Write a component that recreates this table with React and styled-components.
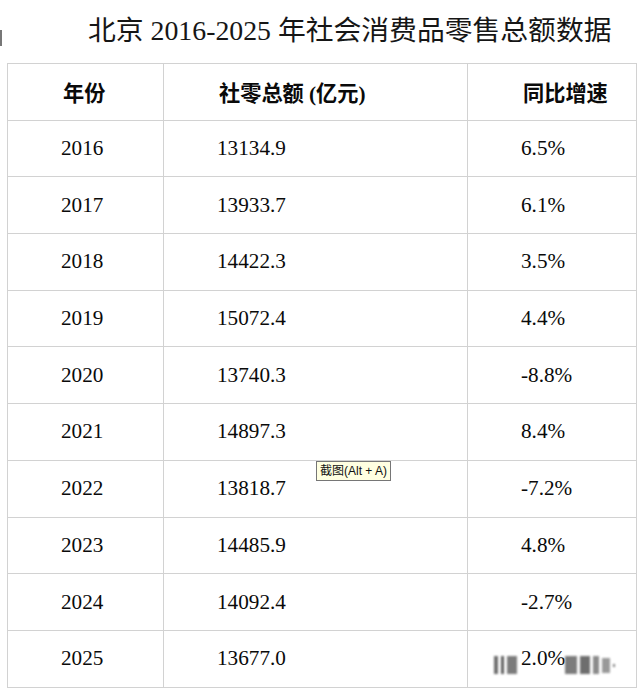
import React from "react";
import styled, { createGlobalStyle } from "styled-components";

const Global = createGlobalStyle`
  html, body { margin: 0; padding: 0; background: #fff; }
  body { font-family: "Liberation Serif", "Noto Sans CJK SC", serif; color: #000; }
`;

const Page = styled.div`
  position: relative;
  width: 641px;
  height: 691px;
  overflow: hidden;
  background: #fff;
`;

const Title = styled.h1`
  margin: 0;
  height: 63px;
  box-sizing: border-box;
  padding: 14px 0 0 88px;
  font-family: "Liberation Serif", "Noto Sans CJK SC", serif;
  font-weight: 400;
  font-size: 27.8px;
  line-height: 34px;
  color: #161616;
  white-space: nowrap;
`;

const Table = styled.div`
  margin-left: 7px;
  width: 630px;
  border: 1px solid #d2d2d2;
  border-bottom: none;
  box-sizing: border-box;
`;

const Row = styled.div`
  display: grid;
  grid-template-columns: 155px 304px 1fr;
  height: 56.7px;
  border-bottom: 1px solid #d2d2d2;
  box-sizing: border-box;
`;

const Cell = styled.div`
  display: flex;
  align-items: center;
  padding-left: ${(p) => (p.$head ? 55 : 53)}px;
  border-left: ${(p) => (p.$first ? "none" : "1px solid #d2d2d2")};
  font-family: "Liberation Serif", "Noto Sans CJK SC", serif;
  font-size: 21.2px;
  font-weight: ${(p) => (p.$head ? 700 : 400)};
  color: #0a0a0a;
  white-space: nowrap;
`;

const Tooltip = styled.div`
  position: absolute;
  left: 316px;
  top: 461px;
  height: 20px;
  padding: 0 3px;
  box-sizing: border-box;
  border: 1px solid #767676;
  background: #ffffe1;
  font-family: "Liberation Sans", "Noto Sans CJK SC", sans-serif;
  font-size: 12px;
  line-height: 18px;
  color: #111;
  white-space: nowrap;
`;

const Watermark = styled.div`
  position: absolute;
  left: 494px;
  top: 651px;
  width: 134px;
  height: 28px;
  display: flex;
  align-items: center;
  gap: 3px;
  filter: blur(1.2px);
  opacity: 0.85;
`;

const Bar = styled.div`
  width: ${(p) => p.$w}px;
  height: ${(p) => p.$h}px;
  background: ${(p) => p.$c};
  margin-left: ${(p) => p.$ml || 0}px;
`;

const EdgeMark = styled.div`
  position: absolute;
  left: 0;
  top: 30px;
  width: 2px;
  height: 16px;
  background: #777;
`;

const data = [
  ["2016", "13134.9", "6.5%"],
  ["2017", "13933.7", "6.1%"],
  ["2018", "14422.3", "3.5%"],
  ["2019", "15072.4", "4.4%"],
  ["2020", "13740.3", "-8.8%"],
  ["2021", "14897.3", "8.4%"],
  ["2022", "13818.7", "-7.2%"],
  ["2023", "14485.9", "4.8%"],
  ["2024", "14092.4", "-2.7%"],
  ["2025", "13677.0", "2.0%"],
];

export default function App() {
  return (
    <Page>
      <Global />
      <EdgeMark />
      <Title>北京 2016-2025 年社会消费品零售总额数据</Title>
      <Table>
        <Row>
          <Cell $head $first>年份</Cell>
          <Cell $head>社零总额 (亿元)</Cell>
          <Cell $head>同比增速</Cell>
        </Row>
        {data.map((r) => (
          <Row key={r[0]}>
            <Cell $first>{r[0]}</Cell>
            <Cell>{r[1]}</Cell>
            <Cell>{r[2]}</Cell>
          </Row>
        ))}
      </Table>
      <Tooltip>截图(Alt + A)</Tooltip>
      <Watermark>
        <Bar $w={4} $h={18} $c="#555" />
        <Bar $w={3} $h={18} $c="#444" />
        <Bar $w={10} $h={18} $c="#666" />
        <Bar $w={36} $h={0} $c="transparent" />
        <Bar $w={12} $h={18} $c="#666" $ml={6} />
        <Bar $w={10} $h={18} $c="#555" />
        <Bar $w={6} $h={18} $c="#777" />
        <Bar $w={8} $h={15} $c="#888" />
        <Bar $w={2} $h={3} $c="#666" />
      </Watermark>
    </Page>
  );
}
